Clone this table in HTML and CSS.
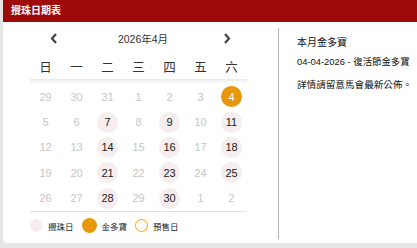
FILE: index.html
```html
<!DOCTYPE html>
<html lang="zh-Hant">
<head>
<meta charset="utf-8">
<link rel="stylesheet" href="styles.css">
</head>
<body>
<div class="card">
  <div class="card-header">攪珠日期表</div>
  <div class="card-body">
    <div class="calendar">
      <div class="nav">
        <svg class="chev" width="8" height="11" viewBox="0 0 8 11"><polyline points="6,1 2,5.5 6,10" fill="none" stroke="#444" stroke-width="2.2"/></svg>
        <div class="month">2026年4月</div>
        <svg class="chev" width="8" height="11" viewBox="0 0 8 11"><polyline points="2,1 6,5.5 2,10" fill="none" stroke="#444" stroke-width="2.2"/></svg>
      </div>
      <div class="weekdays">
        <span>日</span><span>一</span><span>二</span><span>三</span><span>四</span><span>五</span><span>六</span>
      </div>
      <div class="days">
        <div class="day muted">29</div><div class="day muted">30</div><div class="day muted">31</div><div class="day muted">1</div><div class="day muted">2</div><div class="day muted">3</div><div class="day"><span class="dot jackpot">4</span></div>
        <div class="day muted">5</div><div class="day muted">6</div><div class="day"><span class="dot draw">7</span></div><div class="day muted">8</div><div class="day"><span class="dot draw">9</span></div><div class="day muted">10</div><div class="day"><span class="dot draw">11</span></div>
        <div class="day muted">12</div><div class="day muted">13</div><div class="day"><span class="dot draw">14</span></div><div class="day muted">15</div><div class="day"><span class="dot draw">16</span></div><div class="day muted">17</div><div class="day"><span class="dot draw">18</span></div>
        <div class="day muted">19</div><div class="day muted">20</div><div class="day"><span class="dot draw">21</span></div><div class="day muted">22</div><div class="day"><span class="dot draw">23</span></div><div class="day muted">24</div><div class="day"><span class="dot draw">25</span></div>
        <div class="day muted">26</div><div class="day muted">27</div><div class="day"><span class="dot draw">28</span></div><div class="day muted">29</div><div class="day"><span class="dot draw">30</span></div><div class="day muted">1</div><div class="day muted">2</div>
      </div>
      <div class="legend">
        <span class="key key-draw"></span><span class="label">攪珠日</span>
        <span class="key key-jackpot"></span><span class="label">金多寶</span>
        <span class="key key-presale"></span><span class="label">預售日</span>
      </div>
    </div>
    <div class="info">
      <div class="info-title">本月金多寶</div>
      <div class="info-line">04-04-2026 - 復活節金多寶</div>
      <div class="info-note">詳情請留意馬會最新公佈。</div>
    </div>
  </div>
</div>
</body>
</html>
```
FILE: styles.css
```css
html, body {
  margin: 0;
  padding: 0;
}
body {
  background: #e6e6e6;
  width: 417px;
  height: 248px;
  overflow: hidden;
  font-family: "Liberation Sans", "Noto Sans CJK TC", sans-serif;
  color: #222;
}
.card {
  margin-left: 3px;
  width: 430px;
  height: 243px;
  background: #fff;
  border-radius: 0 0 4px 4px;
  overflow: hidden;
}
.card-header {
  height: 22px;
  background: #9e0a0a;
  color: #fff;
  font-size: 10px;
  font-weight: 700;
  line-height: 22px;
  padding-left: 8px;
}
.card-body {
  display: flex;
  align-items: flex-start;
  padding-top: 6px;
}
.calendar {
  width: 217px;
  margin-left: 27px;
  margin-right: 31px;
}
.nav {
  height: 20px;
  display: flex;
  align-items: center;
  padding: 0 16px 0 20px;
}
.chev {
  display: block;
  flex: none;
}
.month {
  flex: 1;
  text-align: center;
  font-size: 10.5px;
  color: #333;
  padding-left: 5px;
}
.weekdays {
  margin-top: 6px;
  height: 30px;
  box-sizing: border-box;
  padding-bottom: 5px;
  display: grid;
  grid-template-columns: repeat(7, 1fr);
  align-items: center;
  font-size: 12.5px;
  color: #333;
  text-align: center;
  background: linear-gradient(to bottom, transparent 25px, #e9e9e9 25px, #f3f3f3 27px, #fff 30px);
}
.days {
  display: grid;
  grid-template-columns: repeat(7, 1fr);
  grid-auto-rows: 25.4px;
  font-size: 11px;
}
.day {
  display: flex;
  align-items: center;
  justify-content: center;
  color: #222;
}
.day.muted {
  color: #c6c6c6;
}
.dot {
  width: 21px;
  height: 21px;
  border-radius: 50%;
  display: flex;
  align-items: center;
  justify-content: center;
}
.dot.draw {
  background: #f6eeee;
}
.dot.jackpot {
  background: #e8960a;
  color: #fff;
}
.legend {
  border-top: 1px solid #e2e2e2;
  height: 28px;
  display: flex;
  align-items: center;
  font-size: 8.5px;
  color: #222;
}
.key {
  width: 13px;
  height: 13px;
  border-radius: 50%;
  box-sizing: border-box;
  flex: none;
  margin-right: 5px;
}
.key-draw {
  background: #f6eeee;
}
.key-jackpot {
  width: 15px;
  height: 15px;
  background: #e8960a;
}
.key-presale {
  border: 1.5px solid #eda02a;
}
.label {
  margin-right: 8px;
}
.info {
  height: 211px;
  border-left: 1px solid #b4b4b4;
  padding: 8px 0 0 18px;
  box-sizing: border-box;
  font-size: 10px;
  line-height: 14px;
  color: #111;
  white-space: nowrap;
}
.info-title {
  margin-bottom: 5px;
}
.info-line {
  font-size: 9.4px;
  margin-bottom: 8.5px;
}
.info-note {
  font-size: 9.6px;
}
```
